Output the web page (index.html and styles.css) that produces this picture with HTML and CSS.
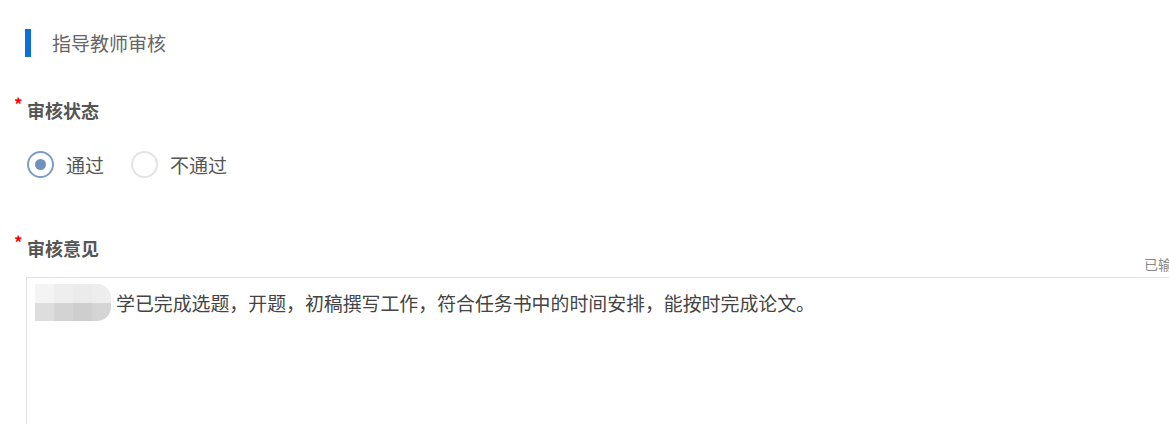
FILE: index.html
```html
<!DOCTYPE html>
<html lang="zh">
<head>
<meta charset="utf-8">
<link rel="stylesheet" href="styles.css">
</head>
<body>
<div class="page">
  <div class="section-title"><span class="bar"></span><span class="title-text">指导教师审核</span></div>

  <div class="field field-status">
    <div class="label"><span class="req">*</span>审核状态</div>
    <div class="radios">
      <label class="radio checked"><span class="circle"><span class="dot"></span></span><span class="radio-text">通过</span></label>
      <label class="radio"><span class="circle"></span><span class="radio-text">不通过</span></label>
    </div>
  </div>

  <div class="field field-opinion">
    <div class="label"><span class="req">*</span>审核意见</div>
    <div class="counter">已输入 36/500</div>
    <div class="textarea">
      <div class="line"><span class="mosaic"><span class="m a1"></span><span class="m a2"></span><span class="m a3"></span><span class="m a4"></span><span class="m b1"></span><span class="m b2"></span><span class="m b3"></span><span class="m b4"></span></span><span class="content">学已完成选题，开题，初稿撰写工作，符合任务书中的时间安排，能按时完成论文。</span></div>
    </div>
  </div>
</div>
</body>
</html>
```

FILE: styles.css
```css
html, body {
  margin: 0;
  padding: 0;
  background: #fff;
  overflow: hidden;
}
body {
  width: 1169px;
  height: 424px;
  font-family: "Noto Sans CJK SC", "Noto Sans", sans-serif;
  color: #555;
}
.page {
  position: relative;
  height: 424px;
}
.section-title {
  display: flex;
  align-items: center;
  padding-top: 29px;
  padding-left: 25px;
  height: 28px;
}
.bar {
  width: 6px;
  height: 28px;
  background: #0c6fd9;
}
.title-text {
  margin-left: 21px;
  font-size: 19px;
  line-height: 28px;
  color: #666;
}
.field-status {
  margin-top: 40px;
}
.label {
  position: relative;
  padding-left: 27px;
  font-size: 18px;
  font-weight: bold;
  line-height: 26px;
  color: #555;
}
.req {
  position: absolute;
  left: 14px;
  top: -6px;
  color: #f00;
  font-size: 17px;
  font-weight: bold;
}
.radios {
  display: flex;
  align-items: center;
  padding-left: 27px;
  margin-top: 28px;
}
.radio {
  display: flex;
  align-items: center;
  margin-right: 27px;
}
.circle {
  box-sizing: border-box;
  width: 27px;
  height: 27px;
  border: 2px solid #e3e3e3;
  border-radius: 50%;
  display: flex;
  align-items: center;
  justify-content: center;
}
.radio.checked .circle {
  border-color: #7c9dc6;
}
.dot {
  width: 11px;
  height: 11px;
  border-radius: 50%;
  background: #6e91bd;
}
.radio-text {
  margin-left: 12px;
  font-size: 19px;
  line-height: 27px;
  color: #555;
}
.field-opinion {
  margin-top: 57px;
  position: relative;
}
.counter {
  position: absolute;
  left: 1144px;
  top: 20px;
  white-space: nowrap;
  font-size: 14px;
  color: #888;
  line-height: 18px;
}
.textarea {
  margin-top: 16px;
  margin-left: 26px;
  height: 160px;
  border-top: 1px solid #e2e2e2;
  border-left: 1px solid #e2e2e2;
  padding: 6px 0 0 8px;
}
.line {
  display: flex;
  align-items: center;
  height: 37px;
}
.mosaic {
  display: grid;
  grid-template-columns: repeat(4, 19px);
  grid-template-rows: 19px 18px;
  width: 76px;
  border-radius: 0 14px 14px 0;
  overflow: hidden;
  margin-right: 5px;
}
.m { display: block; }
.a1 { background: #f4f4f4; }
.a2 { background: #eeeeee; }
.a3 { background: #ebebeb; }
.a4 { background: #ededed; }
.b1 { background: #dddddd; }
.b2 { background: #d3d3d3; }
.b3 { background: #cecece; }
.b4 { background: #d5d5d5; }
.content {
  font-size: 18.9px;
  line-height: 37px;
  color: #444;
}
```
